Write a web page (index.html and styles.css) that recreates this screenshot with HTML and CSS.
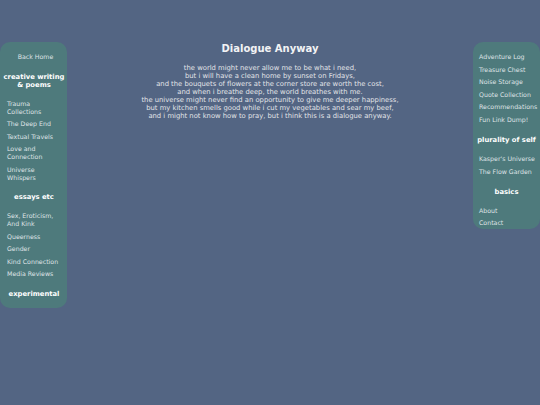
FILE: index.html
```html
<!DOCTYPE html>
<html>
<head>
<meta charset="utf-8">
<link rel="stylesheet" href="styles.css">
</head>
<body>
<div class="page">
  <nav class="side side-left">
    <a class="link center" href="#">Back Home</a>
    <div class="head">creative writing<br>&amp; poems</div>
    <a class="link" href="#">Trauma<br>Collections</a>
    <a class="link" href="#">The Deep End</a>
    <a class="link" href="#">Textual Travels</a>
    <a class="link" href="#">Love and<br>Connection</a>
    <a class="link" href="#">Universe<br>Whispers</a>
    <div class="head">essays etc</div>
    <a class="link" href="#">Sex, Eroticism,<br>And Kink</a>
    <a class="link" href="#">Queerness</a>
    <a class="link" href="#">Gender</a>
    <a class="link" href="#">Kind Connection</a>
    <a class="link" href="#">Media Reviews</a>
    <div class="head last">experimental</div>
  </nav>
  <main class="main">
    <h1 class="title">Dialogue Anyway</h1>
    <p class="poem">the world might never allow me to be what i need,<br>
but i will have a clean home by sunset on Fridays,<br>
and the bouquets of flowers at the corner store are worth the cost,<br>
and when i breathe deep, the world breathes with me.<br>
the universe might never find an opportunity to give me deeper happiness,<br>
but my kitchen smells good while i cut my vegetables and sear my beef,<br>
and i might not know how to pray, but i think this is a dialogue anyway.</p>
  </main>
  <nav class="side side-right">
    <a class="link" href="#">Adventure Log</a>
    <a class="link" href="#">Treasure Chest</a>
    <a class="link" href="#">Noise Storage</a>
    <a class="link" href="#">Quote Collection</a>
    <a class="link" href="#">Recommendations</a>
    <a class="link" href="#">Fun Link Dump!</a>
    <div class="head">plurality of self</div>
    <a class="link" href="#">Kasper's Universe</a>
    <a class="link" href="#">The Flow Garden</a>
    <div class="head">basics</div>
    <a class="link" href="#">About</a>
    <a class="link last" href="#">Contact</a>
  </nav>
</div>
</body>
</html>
```

FILE: styles.css
```css
html, body {
  margin: 0;
  padding: 0;
  background: #536583;
  height: 100%;
}
body {
  font-family: "DejaVu Sans", Verdana, sans-serif;
  color: #e4e6ea;
}
.page {
  display: flex;
  align-items: flex-start;
  padding-top: 42px;
}
.side {
  width: 67px;
  flex: none;
  background: #4e7a7c;
  border-radius: 10px;
  display: flex;
  flex-direction: column;
  box-sizing: border-box;
  padding-top: 11px;
}
.side-left {
  padding-left: 7px;
  padding-right: 3px;
  padding-bottom: 10.5px;
}
.side-left .link {
  margin-bottom: 4.45px;
}
.side-right {
  padding-left: 6px;
  padding-right: 1px;
  padding-bottom: 1.5px;
}
.link {
  display: block;
  font-size: 6.25px;
  line-height: 8px;
  color: #dfe3e6;
  text-decoration: none;
  margin-bottom: 4.6px;
}
.link.center {
  text-align: center;
}
.side .link.last {
  margin-bottom: 0;
}
.head {
  font-size: 6.8px;
  line-height: 8px;
  font-weight: bold;
  color: #ffffff;
  text-align: center;
  white-space: nowrap;
  margin: 7.4px -4px 11px -7px;
}
.side-right .head {
  margin-left: -6px;
  margin-right: -1px;
}
.head.last {
  margin-bottom: 0;
}
.main {
  flex: 1;
  text-align: center;
}
.title {
  font-size: 10px;
  line-height: 12px;
  font-weight: bold;
  color: #f2f3f5;
  margin: 1px 0 9px;
}
.poem {
  font-size: 6.8px;
  line-height: 8px;
  margin: 0;
  color: #e2e4e8;
}
```
